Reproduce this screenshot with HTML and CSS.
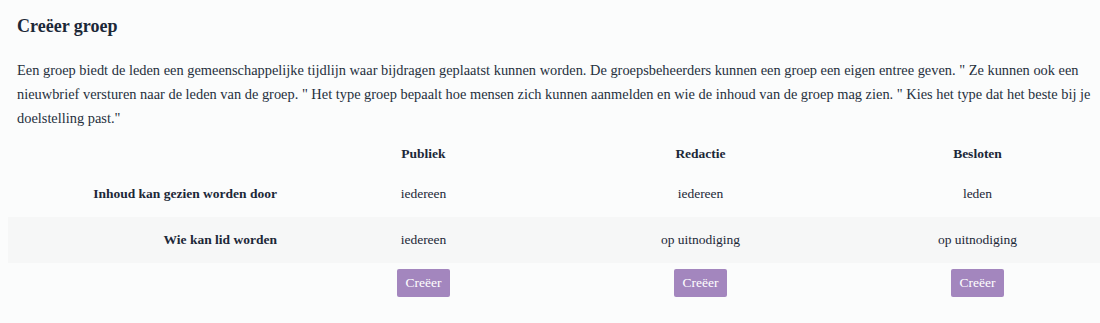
FILE: index.html
```html
<!DOCTYPE html>
<html lang="nl">
<head>
  <meta charset="UTF-8">
  <title>Creëer groep</title>
  <link rel="stylesheet" href="styles.css">
</head>
<body>

<h2>Creëer groep</h2>

<p class="intro">Een groep biedt de leden een gemeenschappelijke tijdlijn waar bijdragen geplaatst kunnen worden. De groepsbeheerders kunnen een groep een eigen entree geven. " Ze kunnen ook een nieuwbrief versturen naar de leden van de groep. " Het type groep bepaalt hoe mensen zich kunnen aanmelden en wie de inhoud van de groep mag zien. " Kies het type dat het beste bij je doelstelling past."</p>

<table class="types">
  <thead>
    <tr>
      <th></th>
      <th>Publiek</th>
      <th>Redactie</th>
      <th>Besloten</th>
    </tr>
  </thead>
  <tbody>
    <tr>
      <th class="label">Inhoud kan gezien worden door</th>
      <td>iedereen</td>
      <td>iedereen</td>
      <td>leden</td>
    </tr>
    <tr class="alt">
      <th class="label">Wie kan lid worden</th>
      <td>iedereen</td>
      <td>op uitnodiging</td>
      <td>op uitnodiging</td>
    </tr>
    <tr class="actions">
      <th></th>
      <td><button class="btn">Creëer</button></td>
      <td><button class="btn">Creëer</button></td>
      <td><button class="btn">Creëer</button></td>
    </tr>
  </tbody>
</table>

</body>
</html>
```

FILE: styles.css
```css
body {
  font-family: "Liberation Serif", "DejaVu Serif", serif;
  margin: 0;
  padding: 0 8px;
  background: #fbfcfc;
  color: #1c2838;
  overflow: hidden;
}

h2 {
  font-size: 18px;
  margin: 15px 0 0 9px;
  line-height: 22px;
}

.intro {
  font-size: 14.4px;
  line-height: 24px;
  margin: 21px 0 0 9px;
  width: 1090px;
  color: #26303d;
}

.types {
  width: 1108px;
  border-collapse: collapse;
  table-layout: fixed;
  margin-top: 4px;
  font-size: 13.5px;
}

.types th,
.types td {
  width: 25%;
  text-align: center;
  padding: 11px 8px 8px;
  line-height: 18px;
}

.types tbody th,
.types tbody td {
  padding: 14px 8px;
}

.types th.label {
  text-align: right;
}

.types tr.alt {
  background: #f6f7f7;
}

.types tr.actions td,
.types tr.actions th {
  padding: 6px 8px 10px;
}

.btn {
  font-family: "Liberation Serif", "DejaVu Serif", serif;
  font-size: 13.5px;
  color: #ffffff;
  background: #a386be;
  border: 0;
  border-radius: 2px;
  height: 28px;
  padding: 0 9px;
}
```
